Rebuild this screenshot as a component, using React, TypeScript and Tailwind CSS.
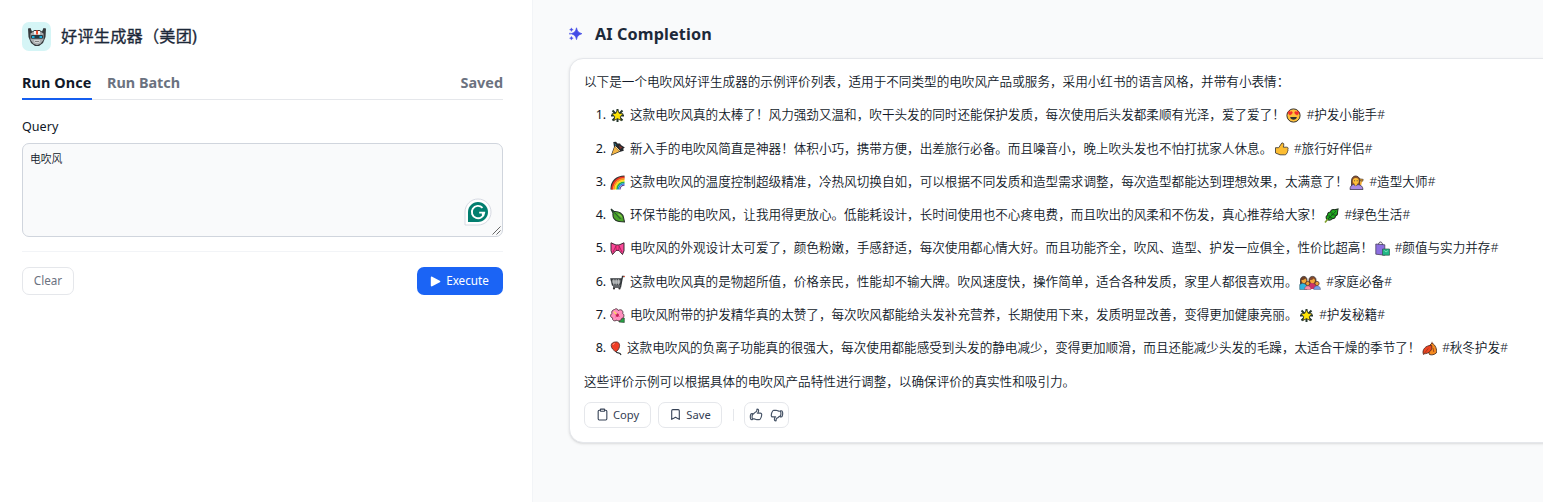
import React from 'react';
import { Clipboard, Bookmark } from 'lucide-react';
import { HiOutlineHandThumbUp, HiOutlineHandThumbDown } from 'react-icons/hi2';

type EmojiName =
  | 'star' | 'party' | 'rainbow' | 'leaf' | 'bow' | 'cart' | 'flower' | 'balloon'
  | 'love' | 'thumb' | 'haircut' | 'herb' | 'bags' | 'family' | 'autumn';

const drawings: Record<EmojiName, React.ReactNode> = {
  star: (
    <>
      <path d="M7.500 1v13M1 7.500h13M2.500 2.500l10 10M12.500 2.500l-10 10" stroke="#25382f" strokeWidth="2" />
      <path d="m7.500 1.800 1.700 3.500 3.900.500-2.800 2.700.7 3.900-3.500-1.800L4 12.400l.7-3.900L1.900 5.800l3.900-.5Z" fill="#fde306" stroke="#2f3220" strokeWidth=".8" />
    </>
  ),
  party: (
    <>
      <path d="M3.300 1 6 .7l1.500 1.800L10 2.500l1 1.500 3.800 2.500-1.600 1.200.6 2L9.500 11 .8 14.800 4 6Z" fill="#25282c" />
      <path d="M4.200 1.700 6.300 4 5.500 5Z" fill="#2389a5" />
      <path d="M9 4.500 12.500 6.500 10 8Z" fill="#84362d" />
      <path d="M4.800 5.500 9.500 10.300 1.700 13.800Z" fill="#f3b545" />
      <path d="M5.300 5.300 9.800 9.900" stroke="#ffe0a0" strokeWidth="1" />
    </>
  ),
  rainbow: (
    <g fill="none">
      <path d="M1.500 14.500C1.500 6 7 1.500 14.500 1.500" stroke="#333" strokeWidth="2.200" />
      <path d="M2.300 14.500C2.500 7 7.500 2.500 14.500 2.500" stroke="#ee3524" strokeWidth="2" />
      <path d="M4 14.500C4 8 8.500 4 14.500 4" stroke="#f7951e" strokeWidth="1.800" />
      <path d="M5.500 14.500C5.500 9 9.500 5.700 14.500 5.700" stroke="#ffe11a" strokeWidth="1.700" />
      <path d="M7 14.500C7 10 10.500 7.300 14.500 7.300" stroke="#27ad47" strokeWidth="1.600" />
      <path d="M8.500 14.500C8.500 11 11.300 8.800 14.500 8.800" stroke="#1687e0" strokeWidth="1.600" />
      <path d="M10 14.500C10 12 12 10.200 14.500 10.200" stroke="#5b3b9c" strokeWidth="1.200" />
    </g>
  ),
  leaf: (
    <>
      <path d="m1 1 3 2.500C9 3 13 6 13.500 9.500L14.500 14 9 13.500C4 13 2.500 9 3 5Z" fill="#4aa329" stroke="#253128" strokeWidth="1.100" />
      <path d="m1 1.500 3.500 3.200L10.500 11" fill="none" stroke="#1f4530" strokeWidth="1" />
      <path d="M8 5.500c2.200.700 4 2.500 4.300 4.500L8.500 7Z" fill="#87c94b" />
    </>
  ),
  bow: (
    <>
      <path d="M1 1.800 6 4h3l5-2.200v8l-1.500 3.700L9 9.500H6l-3.500 4L1 9.800Z" fill="#f94898" stroke="#3f2732" strokeWidth="1" />
      <path d="m6 5-3 6M9 5l3 6" stroke="#b71959" strokeWidth="1" />
      <rect x="6" y="4.200" width="3" height="5" rx="1" fill="#ff3487" stroke="#76214b" strokeWidth=".6" />
    </>
  ),
  cart: (
    <>
      <path d="M1 4h10.500l-1.500 6H2.500Z" fill="#8e9294" stroke="#303538" strokeWidth="1.300" />
      <path d="M3.800 4v6M6.200 4v6M8.600 4v6M1.500 7h9" stroke="#d5d7d8" strokeWidth=".6" />
      <path d="M14.500 1.500h-2L10.500 12H3" fill="none" stroke="#303538" strokeWidth="1.300" />
      <circle cx="4" cy="13.500" r="1.100" fill="#333" />
      <circle cx="9.500" cy="13.500" r="1.100" fill="#333" />
      <path d="M13.500 1.500h1.500" stroke="#e05b42" />
    </>
  ),
  flower: (
    <>
      <path d="m9 9 5.300 1v4.500L9 14Z" fill="#25a343" stroke="#27332b" strokeWidth=".6" />
      <path d="M4.500 1.500C6 0 8 1 8.200 2.500c3-2 5.500.5 4.500 3 2 1 1.500 4.500-1 5C11 13 8 13.500 7 12c-3 2-5 0-4.300-2C0 9.500 0 6.500 2 5.500 1 3.500 2.500 2 4.500 1.500Z" fill="#ff8fbd" stroke="#51343f" strokeWidth=".9" />
      <path d="M7.300 5v4M5 6l4.500 2.500M5.500 9 9 6" stroke="#db3d78" strokeWidth="1" />
      <path d="m7 7.200-3-3.500" stroke="#f7e254" strokeWidth="1.300" />
      <circle cx="7.300" cy="7.300" r="1.400" fill="#c41f58" />
    </>
  ),
  balloon: (
    <>
      <path d="M6 10.500c1 3 4-.5 5 3.500" fill="none" stroke="#303438" strokeWidth="1.200" />
      <path d="M5.500 1C8.500.5 10 3 9.500 5.500 9 8.500 7 10 6 10.800 3.500 9.500 1.200 7 1.200 4.500 1.200 2.500 3 1 5.500 1Z" fill="#ef3e26" stroke="#54302c" strokeWidth=".9" />
      <path d="M3 4c.2-1 .8-1.500 1.700-1.700" stroke="#ff9c83" fill="none" />
    </>
  ),
  love: (
    <>
      <circle cx="7.500" cy="7.500" r="6.600" fill="#ffc13b" stroke="#35322f" strokeWidth="1" />
      <path d="M2.200 4c.6-1.300 1.900-1 2.200 0 .7-1 2.100-.6 1.900.700-.1 1-1.300 1.900-2.400 2.400C2.700 6.300 1.800 5 2.200 4ZM12.800 4c-.6-1.300-1.900-1-2.200 0-.7-1-2.100-.6-1.900.700.1 1 1.300 1.900 2.400 2.400C12.300 6.300 13.200 5 12.800 4Z" fill="#f3302d" stroke="#f3302d" strokeWidth=".5" />
      <path d="M4.200 9h6.600c0 3.500-6.600 3.500-6.600 0Z" fill="#32302f" />
    </>
  ),
  thumb: (
    <path d="M1.500 6.700h3.200L7.800 2c2-.5 2.500 1 1.500 4.200h3.500c1.500 0 1.700 1.500.8 2 .8.600.5 1.700-.2 2 .5.800 0 1.600-.7 1.900 0 1.300-1 1.700-2.200 1.700H6L1.500 12Z" fill="#fcbd32" stroke="#484139" strokeWidth=".9" />
  ),
  haircut: (
    <>
      <path d="M2.500 12V6C2.500-.500 10-.500 11 5v7Z" fill="#8e522b" stroke="#3d302b" strokeWidth=".8" />
      <path d="m11.500 10 1-4.500" stroke="#f8ac2b" strokeWidth="1.500" />
      <path d="m10.500 3.800 3.700.5-.4 1.900-3-.6Z" fill="#e8a02c" stroke="#3d302b" strokeWidth=".6" />
      <circle cx="6.800" cy="6" r="3" fill="#ffc13b" />
      <path d="M1 14.500c0-3 1.500-4.800 3.500-5l2.300 1.200 2.200-1.200c2.700.5 4.700 1.500 5 5Z" fill="#a88ae6" stroke="#3f3a50" strokeWidth=".8" />
      <path d="m5 8.500 1.800 2.700 1.800-2.700" fill="#ffc13b" />
      <circle cx="5.600" cy="5.700" r=".5" fill="#333" />
      <circle cx="8.100" cy="5.700" r=".5" fill="#333" />
    </>
  ),
  herb: (
    <>
      <path d="M3 11.500C1.500 9.500 2 8 3.500 7.200 3.500 5 5 4 6.500 4 7 2 9 1 10.500 1.800L14 .900l-.5 3.600c.3 1.800-.7 2.900-2 3.500 0 1.700-1.500 2.700-3.200 2.600C7 12 5 12.500 3 11.500Z" fill="#1fae1c" stroke="#1d331e" strokeWidth="1.100" />
      <path d="M3.500 11.500 12 3.200M5.200 9.800V7.200M8 7V4.200M5.500 9.600l2.800.2M8.300 6.800l3 .2" stroke="#114a18" strokeWidth=".9" />
      <path d="m1 14.500 2.600-3.200" stroke="#7fa02c" strokeWidth="1.600" />
    </>
  ),
  bags: (
    <>
      <path d="M3.500 4c0-4 4-4 4 0" fill="none" stroke="#453f51" strokeWidth="1" />
      <path d="m.8 3 9 .8v10.400L.8 13.200Z" fill="#8c6fe0" stroke="#4b4260" strokeWidth=".8" />
      <path d="M7.500 8h7v6.200h-7Z" fill="#20b886" stroke="#31594d" strokeWidth=".7" />
      <path d="m9.300 9.500 1.700 1.500 2-1.500" fill="none" stroke="#85e1bd" strokeWidth=".9" />
    </>
  ),
  family: (
    <>
      <path d="M1.500 10V5C1.500 .200 8 .200 8 5v5Z" fill="#704126" stroke="#342d2d" strokeWidth=".8" />
      <path d="M2.500 5c1.500 0 3-.5 3.700-1.500L7.500 5c0 4.500-5 4.500-5 0Z" fill="#f3a938" />
      <path d="M.7 14.500V9.500l2.800-1.300L8 9.500v5Z" fill="#30b4de" stroke="#2d4c58" strokeWidth=".5" />
      <path d="M10 9.500V5c0-4.800 7-4.800 7 0v4.500Z" fill="#854a2d" stroke="#342d2d" strokeWidth=".8" />
      <path d="M11 5c1.500 0 3-.5 3.700-1.500L16 5c0 4.500-5 4.500-5 0Z" fill="#f3a938" />
      <path d="M9.500 14V8.800l3-.8 4.500 1.500V14Z" fill="#ce3169" />
      <path d="M5.500 14.500c0-5 6.500-5 6.500 0Z" fill="#ff88a5" stroke="#5e3c46" strokeWidth=".4" />
      <circle cx="8.700" cy="8.500" r="2.100" fill="#eda238" stroke="#573328" strokeWidth=".8" />
      <path d="M14.700 14.500c0-5 6.800-5 6.800 0Z" fill="#759ee8" stroke="#394968" strokeWidth=".4" />
      <circle cx="18" cy="8.500" r="2.100" fill="#eda238" stroke="#573328" strokeWidth=".8" />
    </>
  ),
  autumn: (
    <>
      <path d="M7.500 13.500C5.500 9.500 6.500 4.500 10 2c3.500 2 5.300 6.500 4.300 10-2 1.800-4.800 2.300-6.800 1.500Z" fill="#f58a1f" stroke="#4f3222" strokeWidth=".9" />
      <path d="M1.200 12.800C.2 9 3 4.500 9.500 4.300c1.500 4.200-2 8.700-8.300 8.500Z" fill="#ee4420" stroke="#572d25" strokeWidth=".9" />
      <path d="m1.200 14 5-6.500M10 .8V3M11 7l.8 4" stroke="#8f3a20" strokeWidth=".8" />
    </>
  ),
};

const widths: Partial<Record<EmojiName, number>> = { family: 22, balloon: 12 };

function Emoji({ name }: { name: EmojiName }) {
  const w = widths[name] ?? 15;
  return (
    <svg width={w} height={15} viewBox={`0 0 ${w} 15`} className="shrink-0" fill="none">
      {drawings[name]}
    </svg>
  );
}

const reviews: { icon: EmojiName; text: string; end: EmojiName; tag: string }[] = [
  { icon: 'star', text: '这款电吹风真的太棒了！风力强劲又温和，吹干头发的同时还能保护发质，每次使用后头发都柔顺有光泽，爱了爱了！', end: 'love', tag: '护发小能手' },
  { icon: 'party', text: '新入手的电吹风简直是神器！体积小巧，携带方便，出差旅行必备。而且噪音小，晚上吹头发也不怕打扰家人休息。', end: 'thumb', tag: '旅行好伴侣' },
  { icon: 'rainbow', text: '这款电吹风的温度控制超级精准，冷热风切换自如，可以根据不同发质和造型需求调整，每次造型都能达到理想效果，太满意了！', end: 'haircut', tag: '造型大师' },
  { icon: 'leaf', text: '环保节能的电吹风，让我用得更放心。低能耗设计，长时间使用也不心疼电费，而且吹出的风柔和不伤发，真心推荐给大家！', end: 'herb', tag: '绿色生活' },
  { icon: 'bow', text: '电吹风的外观设计太可爱了，颜色粉嫩，手感舒适，每次使用都心情大好。而且功能齐全，吹风、造型、护发一应俱全，性价比超高！', end: 'bags', tag: '颜值与实力并存' },
  { icon: 'cart', text: '这款电吹风真的是物超所值，价格亲民，性能却不输大牌。吹风速度快，操作简单，适合各种发质，家里人都很喜欢用。', end: 'family', tag: '家庭必备' },
  { icon: 'flower', text: '电吹风附带的护发精华真的太赞了，每次吹风都能给头发补充营养，长期使用下来，发质明显改善，变得更加健康亮丽。', end: 'star', tag: '护发秘籍' },
  { icon: 'balloon', text: '这款电吹风的负离子功能真的很强大，每次使用都能感受到头发的静电减少，变得更加顺滑，而且还能减少头发的毛躁，太适合干燥的季节了！', end: 'autumn', tag: '秋冬护发' },
];

function RobotIcon() {
  return (
    <svg width="20" height="20" viewBox="0 0 20 20" fill="none">
      <path d="M1 1.500 3.500 1l1.500 3.500L7.500 3h5L15 4.500 16.500 1l2.500.5-.5 8.500-2.500 6-4 3H8l-4-3-2.500-6Z" fill="#34383b" />
      <path d="M3.500 6.500 7.500 4h5l4 2.500V13l-3 3.800-3 1.300h-1l-3-1.300-3-3.800Z" fill="#a9adaf" />
      <path d="M7 4h6v3.500H7Z" fill="#f5f5f5" />
      <path d="M9 3.500h2v4H9Z" fill="#ef4c2d" />
      <rect x="4" y="8" width="12" height="3.800" rx="1" fill="#263a43" />
      <path d="M5 9h2.500v2H5ZM12.500 9H15v2h-2.500Z" fill="#1baddd" />
      <path d="M7 13.300h6L12 16H8Z" fill="#dedfdf" />
      <path d="M8 14.600h4" stroke="#777" />
    </svg>
  );
}

function Sparkles() {
  return (
    <svg width="14" height="14" viewBox="0 0 14 14" fill="#444ce7">
      <path d="M7.500.8c.9 3.800 1.800 4.600 5.400 5.900C9.300 8 8.400 8.800 7.500 12.600 6.600 8.800 5.800 8 2.200 6.700 5.800 5.400 6.600 4.600 7.500.8Z" stroke="#444ce7" strokeWidth=".7" />
      <path d="M2.400.800l.6 1.300 1.300.6-1.300.6-.6 1.300-.6-1.300L.5 2.700l1.300-.6ZM1 5.800l.4.5.5.4-.5.4-.4.5-.4-.5-.5-.4.5-.4ZM2.400 9.300l.6 1.300 1.300.6-1.300.6-.6 1.300-.6-1.300-1.300-.6 1.300-.6Z" stroke="#444ce7" strokeWidth=".3" />
    </svg>
  );
}

export default function App() {
  return (
    <div className="flex h-[502px] w-full overflow-hidden bg-[#f9fafb] font-['Noto_Sans','Noto_Sans_CJK_SC',sans-serif] text-[#101828]">
      <section className="w-[533px] shrink-0 border-r border-[#f2f4f7] bg-white pr-[29px] pl-[22px]">
        <header className="flex items-center gap-[10px] pt-[22px]">
          <div className="flex size-[29px] items-center justify-center rounded-[7px] bg-[#d5f5f6]">
            <RobotIcon />
          </div>
          <h1 className="text-[16.2px] leading-[29px] tracking-[0.2px] text-[#1d2939] [-webkit-text-stroke:0.3px_#1d2939]">好评生成器（美团)</h1>
        </header>

        <nav className="mt-[18px] flex h-[31px] border-b border-[#e5e7eb] text-[14.4px] leading-7 font-bold text-[#6b7280]">
          <div className="h-[31px] w-[70px] border-b-2 border-[#155eef] tracking-[0.1px] whitespace-nowrap text-[#101828]">Run Once</div>
          <div className="ml-[15px]">Run Batch</div>
          <div className="ml-auto">Saved</div>
        </nav>

        <label className="mt-[18px] block text-[12.6px] leading-[18px]">Query</label>
        <div className="relative mt-[7px] h-[94px] rounded-[7px] border border-[#d0d5dd] bg-[#f9fafb] px-[7px] py-[7px] text-[10.8px] leading-4 font-[350]">
          电吹风
          <svg className="absolute right-[10px] bottom-[10px]" width="28" height="28" viewBox="0 0 28 28" fill="none">
            <path d="M1 14C1 6.800 6.800 1 14 1s13 5.800 13 13-5.800 13-13 13H1Z" fill="#fff" stroke="#d6d9e2" />
            <path d="M4 14C4 8.500 8.500 4 14 4s10 4.500 10 10-4.500 10-10 10H4Z" fill="#027e6f" />
            <path d="M18.500 9.800A6.200 6.200 0 1 0 20.200 14.600h-5M18.800 14.600v4" stroke="#fff" strokeWidth="1.900" />
          </svg>
          <svg className="absolute right-[1px] bottom-[1px]" width="9" height="9" viewBox="0 0 9 9" stroke="#555" strokeWidth=".9">
            <path d="m.5 8.500 8-8m-4 8 4-4" />
          </svg>
        </div>

        <div className="mt-[14px] flex items-start justify-between border-t border-[#f2f4f7] pt-[15px] text-[11.7px]">
          <button className="h-7 w-[52px] rounded-[7px] border border-[#e5e7eb] text-[#6b7280]">Clear</button>
          <button className="flex h-7 w-[86px] items-center justify-center gap-[5px] rounded-[7px] bg-[#1b64f5] pr-[1px] text-white">
            <svg width="11" height="11" viewBox="0 0 11 11" fill="currentColor">
              <path d="M.8 1.500C.8.700 1.500.400 2.200.700l7.600 4c.7.400.7 1.200 0 1.600l-7.600 4c-.7.300-1.400 0-1.400-.8Z" />
            </svg>
            <span>Execute</span>
          </button>
        </div>
      </section>

      <main className="min-w-0 flex-1 pt-[22px] pl-9">
        <div className="flex h-6 items-center gap-3">
          <Sparkles />
          <h2 className="text-[16.2px] font-bold tracking-[0.12px] text-[#1d2939]">AI Completion</h2>
        </div>

        <article className="mt-3 -mr-4 h-[385px] rounded-[14px] border border-[#e5e7eb] bg-white px-[14px] pt-[7px] text-[12.6px] whitespace-nowrap shadow-sm">
          <p className="flex h-[33px] items-center font-[350]">以下是一个电吹风好评生成器的示例评价列表，适用于不同类型的电吹风产品或服务，采用小红书的语言风格，并带有小表情：</p>
          <ol>
            {reviews.map((r, i) => (
              <li key={r.tag} className="flex h-[33.3px] items-center">
                <span className="w-[22px] text-right tracking-[-0.2px]">{i + 1}.</span>
                <span className="flex items-center gap-[5px] pl-[4px]">
                  <Emoji name={r.icon} />
                  <span className="font-[350]">{r.text}</span>
                </span>
                <span className="flex items-center gap-[5px] pl-[1.5px]">
                  <Emoji name={r.end} />
                  <span className="font-[350]">
                    <span className="tracking-[-0.4px]">#</span>{r.tag}<span>#</span>
                  </span>
                </span>
              </li>
            ))}
          </ol>
          <p className="flex h-[33.3px] items-center font-[350]">这些评价示例可以根据具体的电吹风产品特性进行调整，以确保评价的真实性和吸引力。</p>

          <div className="mt-[3.3px] flex h-[26px] items-center text-[11.2px] text-[#344054]">
            <button className="flex h-[26px] w-[67px] items-center justify-center gap-1 rounded-[7px] border border-[#e5e7eb]">
              <Clipboard size={13} strokeWidth={2} />
              <span>Copy</span>
            </button>
            <button className="ml-[7px] flex h-[26px] w-[64px] items-center justify-center gap-1 rounded-[7px] border border-[#e5e7eb]">
              <Bookmark size={13} strokeWidth={2} />
              <span>Save</span>
            </button>
            <div className="mx-[10px] ml-[11px] h-3 w-px bg-[#e5e7eb]" />
            <div className="flex h-[26px] w-[45px] items-center justify-center gap-[7px] rounded-[7px] border border-[#e5e7eb] text-[#475467]">
              <HiOutlineHandThumbUp size={14} strokeWidth={2} />
              <HiOutlineHandThumbDown size={14} strokeWidth={2} />
            </div>
          </div>
        </article>
      </main>
    </div>
  );
}
